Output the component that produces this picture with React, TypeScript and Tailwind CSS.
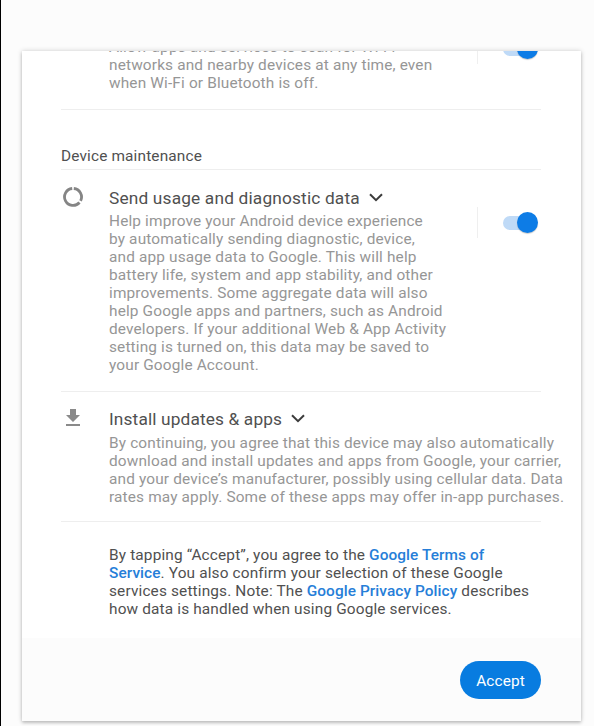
import type { ReactNode } from "react";

function Lines({ lines, className }: { lines: ReactNode[]; className: string }) {
  return (
    <p className={"whitespace-nowrap text-[15.4px] leading-[18px] tracking-[0.15px] " + className}>
      {lines.map((line, i) => (
        <span key={i} className="block">
          {line}
        </span>
      ))}
    </p>
  );
}

function Toggle() {
  return (
    <div className="flex h-[31px] items-center border-l border-[#efefef] pl-[25px]">
      <div className="flex h-[14px] w-[34px] items-center justify-end rounded-full bg-[#bfdaf7]">
        <div className="-mr-px size-[21px] shrink-0 rounded-full bg-[#0d7ce6] shadow-[0_1px_1px_rgba(0,0,0,0.2)]" />
      </div>
    </div>
  );
}

function Chevron() {
  return (
    <svg className="-mt-px" width="14" height="9" viewBox="0 0 14 9" fill="none" stroke="#3c3c3c" strokeWidth="2">
      <path d="M1 1.2 7 7.2 13 1.2" />
    </svg>
  );
}

function UsageIcon() {
  return (
    <svg width="22" height="22" viewBox="0 0 22 22" fill="none" stroke="#858585" strokeWidth="2.8">
      <path d="M11.8 2.5A8.5 8.5 0 0 1 18.6 14.8" />
      <path d="M17.5 16.5A8.5 8.5 0 1 1 10.2 2.5" />
    </svg>
  );
}

function DownloadIcon() {
  return (
    <svg width="24" height="24" viewBox="0 0 24 24" fill="#8a8a8a">
      <path d="M19 9h-4V3H9v6H5l7 7 7-7zM5 18v2h14v-2H5z" />
    </svg>
  );
}

const link = "font-medium tracking-[0.08px] text-[#267ed8]";

export default function App() {
  return (
    <div className="h-[726px] w-[594px] overflow-hidden border-l border-black bg-[#fcfcfc] pl-[21px] pt-[51px] font-['Roboto',sans-serif] text-[15.4px] text-[#505050]">
      <main className="flex h-[670px] w-[559px] flex-col bg-white shadow-[0_2px_3px_rgba(0,0,0,0.18),0_0_5px_rgba(0,0,0,0.18)]">
        <div className="h-[587px] overflow-hidden pl-[39px] pr-[40px]">
          <section className="-mt-[13px] flex h-[72px] justify-between border-b border-[#eeeeee] pl-12">
            <Lines
              className="text-[#969696]"
              lines={["Allow apps and services to scan for Wi-Fi", "networks and nearby devices at any time, even", "when Wi-Fi or Bluetooth is off."]}
            />
            <div className="mr-[4px] -mt-[5px]"><Toggle /></div>
          </section>

          <h2 className="flex h-[60px] items-end border-b border-[#eeeeee] pb-[4px] leading-[18px] tracking-[0.15px]">Device maintenance</h2>

          <section className="flex h-[222px] border-b border-[#eeeeee]">
            <div className="w-12 shrink-0 pl-px pt-[16px]"><UsageIcon /></div>
            <div className="flex-1 pt-[17px]">
              <h3 className="flex items-center gap-[9px] whitespace-nowrap text-[17.3px] leading-[22px] tracking-[0.17px]">
                Send usage and diagnostic data <Chevron />
              </h3>
              <Lines
                className="mt-[3px] text-[#969696]"
                lines={[
                  "Help improve your Android device experience",
                  "by automatically sending diagnostic, device,",
                  "and app usage data to Google. This will help",
                  "battery life, system and app stability, and other",
                  "improvements. Some aggregate data will also",
                  "help Google apps and partners, such as Android",
                  "developers. If your additional Web & App Activity",
                  "setting is turned on, this data may be saved to",
                  "your Google Account.",
                ]}
              />
            </div>
            <div className="mr-[4px] pt-[37px]"><Toggle /></div>
          </section>

          <section className="flex h-[130px] border-b border-[#eeeeee]">
            <div className="w-12 shrink-0 pt-[14px]"><DownloadIcon /></div>
            <div className="pt-[16px]">
              <h3 className="flex items-center gap-[9px] whitespace-nowrap text-[17.3px] leading-[22px] tracking-[0.14px]">
                Install updates &amp; apps <Chevron />
              </h3>
              <Lines
                className="mt-[4px] text-[#969696]"
                lines={[
                  "By continuing, you agree that this device may also automatically",
                  "download and install updates and apps from Google, your carrier,",
                  "and your device’s manufacturer, possibly using cellular data. Data",
                  "rates may apply. Some of these apps may offer in-app purchases.",
                ]}
              />
            </div>
          </section>

          <section className="pl-12 pt-[24px]">
            <Lines
              className=""
              lines={[
                <>By tapping “Accept”, you agree to the <a className={link}>Google Terms of</a></>,
                <><a className={link}>Service</a>. You also confirm your selection of these Google</>,
                <>services settings. Note: The <a className={link}>Google Privacy Policy</a> describes</>,
                "how data is handled when using Google services.",
              ]}
            />
          </section>
        </div>
        <footer className="flex flex-1 justify-end bg-[#fcfcfc] pr-[40px] pt-[23px]">
          <button className="h-[38px] w-[81px] rounded-full bg-[#087ce0] pt-[4px] tracking-[0.1px] text-white">Accept</button>
        </footer>
      </main>
    </div>
  );
}
